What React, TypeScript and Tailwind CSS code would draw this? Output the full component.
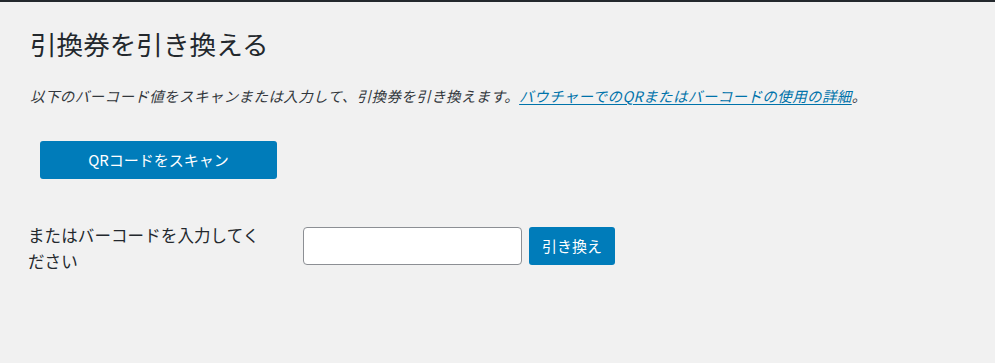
export default function App() {
  return (
    <div
      className="min-h-[363px] border-t-2 border-[#23282d] bg-[#f1f1f1] text-[#23282d]"
      style={{ fontFamily: '"Noto Sans CJK JP", "Noto Sans", sans-serif' }}
    >
      <div className="pl-[30px] pt-[25px]">
        <h1 className="text-[26.6px] font-normal leading-[34px] text-[#23282d]">引換券を引き換える</h1>

        <p className="mt-[25px] text-[14.5px] italic leading-[20px] tracking-[0.4px] text-[#32373c]">
          以下のバーコード値をスキャンまたは入力して、引換券を引き換えます。
          <a href="#" className="text-[#0073aa] underline underline-offset-2">
            バウチャーでのQRまたはバーコードの使用の詳細
          </a>
          。
        </p>

        <button
          type="button"
          className="ml-[10px] mt-[35px] flex h-[38px] w-[237px] items-center justify-center rounded-[3px] bg-[#007cba] text-[15px] text-white"
        >
          QRコードをスキャン
        </button>

        <div className="mt-[43px] flex items-start">
          <label className="-ml-[2px] w-[240px] text-[16.5px] leading-[26px] tracking-[0.1px] text-[#23282d]">
            またはバーコードを入力してください
          </label>
          <div className="ml-[35px] mt-[5px] flex gap-[7px]">
            <input
              type="text"
              className="h-[38px] w-[219px] rounded-[4px] border border-[#8c8f94] bg-white px-2 text-[14px]"
            />
            <button
              type="button"
              className="flex h-[38px] w-[86px] items-center justify-center rounded-[3px] bg-[#007cba] text-[15px] text-white"
            >
              引き換え
            </button>
          </div>
        </div>
      </div>
    </div>
  );
}
